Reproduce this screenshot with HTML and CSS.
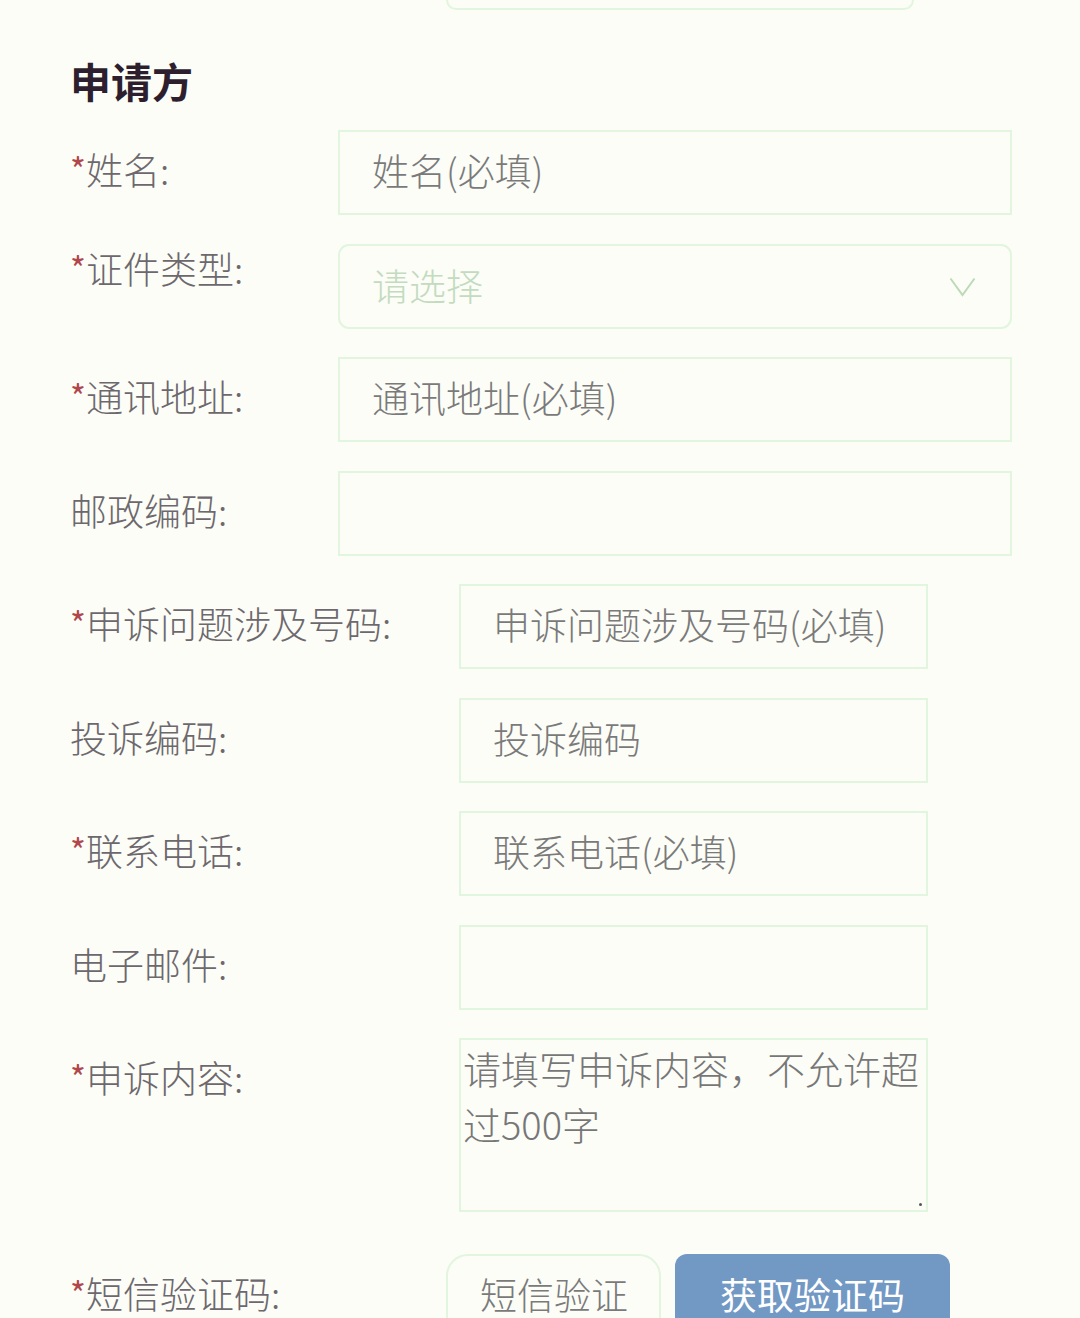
FILE: index.html
```html
<!DOCTYPE html>
<html lang="zh-CN">
<head>
<meta charset="utf-8">
<title>申请方</title>
<link rel="stylesheet" href="styles.css">
</head>
<body>
<div class="page">
  <div class="prev-box"></div>
  <h2 class="section-title">申请方</h2>

  <div class="group group-a">
    <div class="row">
      <label class="label"><span class="req">*</span>姓名:</label>
      <input class="field" type="text" placeholder="姓名(必填)">
    </div>
    <div class="row row-select">
      <label class="label"><span class="req">*</span>证件类型:</label>
      <div class="field select">
        <span class="select-text">请选择</span>
        <svg class="chevron" width="27" height="20" viewBox="0 0 27 20"><path d="M1.5 1.5 L13.5 18 L25.5 1.5" fill="none" stroke="#bcdab7" stroke-width="2"/></svg>
      </div>
    </div>
    <div class="row">
      <label class="label"><span class="req">*</span>通讯地址:</label>
      <input class="field" type="text" placeholder="通讯地址(必填)">
    </div>
    <div class="row">
      <label class="label">邮政编码:</label>
      <input class="field" type="text">
    </div>
  </div>

  <div class="group group-b">
    <div class="row">
      <label class="label"><span class="req">*</span>申诉问题涉及号码:</label>
      <input class="field" type="text" placeholder="申诉问题涉及号码(必填)">
    </div>
    <div class="row">
      <label class="label">投诉编码:</label>
      <input class="field" type="text" placeholder="投诉编码">
    </div>
    <div class="row">
      <label class="label"><span class="req">*</span>联系电话:</label>
      <input class="field" type="text" placeholder="联系电话(必填)">
    </div>
    <div class="row">
      <label class="label">电子邮件:</label>
      <input class="field" type="text">
    </div>
    <div class="row row-textarea">
      <label class="label"><span class="req">*</span>申诉内容:</label>
      <div class="textarea-wrap">
        <textarea class="textarea" placeholder="请填写申诉内容，不允许超过500字"></textarea>
        <span class="grip"></span>
      </div>
    </div>
  </div>

  <div class="row row-sms">
    <label class="label"><span class="req">*</span>短信验证码:</label>
    <input class="field sms-field" type="text" placeholder="短信验证">
    <button class="sms-btn" type="button">获取验证码</button>
  </div>
</div>
</body>
</html>
```
FILE: styles.css
```css
html, body {
  margin: 0;
  padding: 0;
  background: #fcfdf7;
  height: 1318px;
  overflow: hidden;
}

body {
  font-family: "Noto Sans CJK SC", "Noto Sans", sans-serif;
  font-weight: 300;
  color: #6d686d;
}

.page {
  padding: 0 68px 0 70px;
}

.prev-box {
  margin-left: 376px;
  width: 468px;
  height: 10px;
  box-sizing: border-box;
  border: 2px solid #e2f5de;
  border-top: none;
  border-radius: 0 0 12px 12px;
}

.section-title {
  margin: 45px 0 25px;
  font-size: 41px;
  line-height: 50px;
  font-weight: 700;
  color: #2e1f2f;
}

.row {
  display: flex;
  align-items: flex-start;
  margin-bottom: 28.5px;
}

.label {
  flex: 0 0 268px;
  line-height: 79px;
  padding-bottom: 6px;
  font-size: 37px;
  color: #6d686d;
  white-space: nowrap;
}

.req {
  display: inline-block;
  width: 16px;
  font-size: 34px;
  font-weight: 400;
  line-height: 1;
  color: #b0474c;
  vertical-align: 2px;
}

.field {
  width: 674px;
  height: 85px;
  box-sizing: border-box;
  border: 2px solid #e2f5de;
  border-radius: 0;
  background: transparent;
  padding: 0 32px 5px;
  margin: 0;
  font-family: inherit;
  font-weight: 300;
  font-size: 37px;
  color: #7a7a7a;
  outline: none;
}

.field::placeholder {
  color: #7a7a7a;
  opacity: 1;
}

.select {
  display: flex;
  align-items: center;
  justify-content: space-between;
  border-radius: 11px;
  padding: 0 34px 3px 32px;
}

.select-text {
  color: #c3dbbf;
}

.chevron {
  margin-top: 4px;
}

.row-select .label {
  line-height: 48px;
  padding-bottom: 0;
}

.group-b .label {
  flex-basis: 389px;
}

.group-b .field {
  width: 469px;
}

.textarea-wrap {
  position: relative;
  width: 469px;
  height: 174px;
}

.textarea {
  display: block;
  width: 469px;
  height: 174px;
  box-sizing: border-box;
  border: 2px solid #e2f5de;
  background: transparent;
  padding: 0 2px;
  margin: 0;
  font-family: inherit;
  font-weight: 300;
  font-size: 38px;
  line-height: 56px;
  color: #777777;
  resize: none;
  outline: none;
}

.textarea::placeholder {
  color: #777777;
  opacity: 1;
}

.grip {
  position: absolute;
  right: 6px;
  bottom: 6px;
  width: 3px;
  height: 3px;
  border-radius: 50%;
  background: #555;
}

.row-textarea {
  margin-bottom: 42px;
}

.row-sms .label {
  flex-basis: 376px;
}

.row-sms .sms-field {
  width: 215px;
  border-radius: 22px;
  padding: 0 32px 5px;
}

.sms-btn {
  margin-left: 14px;
  width: 275px;
  height: 85px;
  border: none;
  border-radius: 12px;
  background: #7298c4;
  color: #ffffff;
  font-family: inherit;
  font-weight: 400;
  font-size: 37px;
  padding: 0 0 5px;
}
```
